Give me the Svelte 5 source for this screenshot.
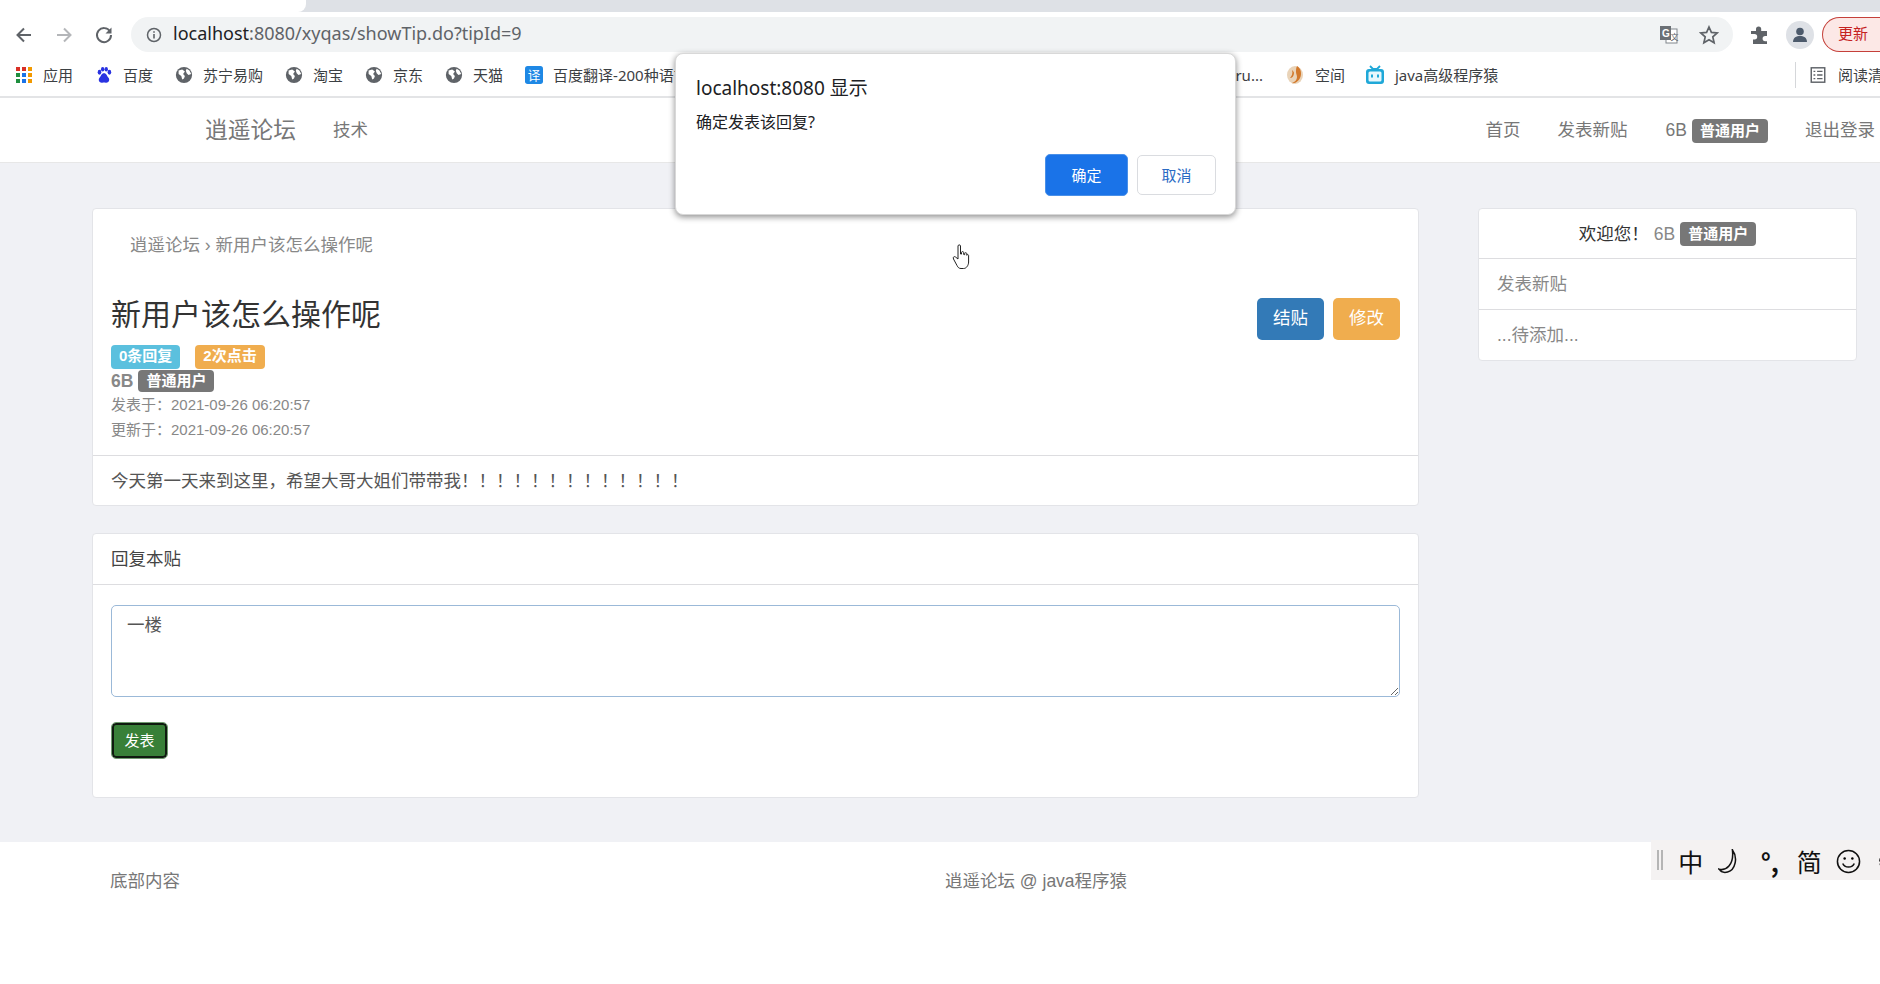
<script>
  const bookmarksLeft = [
    { name: "苏宁易购" },
    { name: "淘宝" },
    { name: "京东" },
    { name: "天猫" }
  ];
  const title = "新用户该怎么操作呢";
</script>

{#snippet globe()}
  <svg class="bm-icon" viewBox="0 0 20 20">
    <circle cx="10" cy="10" r="9" fill="#5f6368" />
    <path d="M4 5l4-1 3 2-2 3 2 2-1 3-2 1-1-4-3-2zM13 3l3 2 2 4-3 1-2-2-1-3z" fill="#fff" />
  </svg>
{/snippet}

<div class="chrome">
  <div class="tabstrip"><div class="activetab"></div></div>
  <div class="toolbar">
    <svg class="nav-icon" viewBox="0 0 20 20"><path d="M17 10H4M10 3.5 3.5 10l6.500 6.500" fill="none" stroke="#5f6368" stroke-width="2" /></svg>
    <svg class="nav-icon" viewBox="0 0 20 20"><path d="M3 10h13M10 3.500 16.500 10 10 16.500" fill="none" stroke="#b4b6b9" stroke-width="2" /></svg>
    <svg class="nav-icon" viewBox="0 0 20 20"><path d="M16 6.500A7 7 0 1 0 17 10" fill="none" stroke="#5f6368" stroke-width="2" /><path d="M17.500 2.500v6h-6z" fill="#5f6368" /></svg>
    <div class="omnibox">
      <svg class="info" viewBox="0 0 16 16"><circle cx="8" cy="8" r="6.500" fill="none" stroke="#5f6368" stroke-width="1.500" /><path d="M7.200 7h1.600v4.500H7.200zM7.200 4.200h1.600v1.600H7.200z" fill="#5f6368" /></svg>
      <span class="url"><span class="host">localhost</span>:8080/xyqas/showTip.do?tipId=9</span>
      <svg class="translate" viewBox="0 0 20 20"><rect x="7" y="4" width="11" height="14" fill="#fff" stroke="#80868b" /><rect x="1" y="1" width="11" height="14" fill="#6b7075" /><text x="3" y="12" font-size="10" font-weight="700" fill="#fff" font-family="Liberation Sans">G</text><text x="11.500" y="15" font-size="8" fill="#5f6368" font-family="Noto Sans CJK SC">文</text></svg>
      <svg class="star" viewBox="0 0 20 20"><path d="m10 2 2.400 5.400 5.800.6-4.400 3.900 1.300 5.800L10 14.700 4.900 17.700l1.300-5.800L1.800 8l5.800-.6z" fill="none" stroke="#5f6368" stroke-width="1.700" /></svg>
    </div>
    <svg class="puzzle" viewBox="0 0 20 20"><path d="M1 6h5V4a2.600 2.600 0 0 1 5.200 0v2H17v5h-1.800a2.600 2.600 0 0 0 0 5.200H17V19H3v-4.500h1.500a2.700 2.700 0 0 0 0-5.400H1z" fill="#5f6368" /></svg>
    <div class="avatar">
      <svg viewBox="0 0 20 20"><circle cx="10" cy="6.500" r="3.800" fill="#4c5a6b" /><path d="M3 17c0-4.500 3.500-6 7-6s7 1.500 7 6z" fill="#4c5a6b" /></svg>
    </div>
    <div class="update">更新</div>
  </div>
  <div class="bookmarks">
    <div class="bm-left">
      <div class="bm">
        <svg class="bm-icon" viewBox="0 0 18 18">
          <rect x="1" y="1" width="4" height="4" fill="#d93025" /><rect x="7" y="1" width="4" height="4" fill="#d93025" /><rect x="13" y="1" width="4" height="4" fill="#f29900" />
          <rect x="1" y="7" width="4" height="4" fill="#1e8e3e" /><rect x="7" y="7" width="4" height="4" fill="#1a73e8" /><rect x="13" y="7" width="4" height="4" fill="#f29900" />
          <rect x="1" y="13" width="4" height="4" fill="#1e8e3e" /><rect x="7" y="13" width="4" height="4" fill="#1a73e8" /><rect x="13" y="13" width="4" height="4" fill="#f29900" />
        </svg>
        应用
      </div>
      <div class="bm">
        <svg class="bm-icon" viewBox="0 0 20 20" fill="#2932e1">
          <ellipse cx="5" cy="7" rx="2" ry="2.700" /><ellipse cx="8.500" cy="3.500" rx="1.900" ry="2.500" /><ellipse cx="12.500" cy="3.500" rx="1.900" ry="2.500" /><ellipse cx="16" cy="7" rx="2" ry="2.700" />
          <path d="M10 8c-3 0-3 3-5 5-2 2.500 0 6 3 5.500 1.500-.3 2.500-.3 4 0 3 .5 5-3 3-5.500-2-2-2-5-5-5z" />
        </svg>
        百度
      </div>
      {#each bookmarksLeft as b}
        <div class="bm">{@render globe()}{b.name}</div>
      {/each}
      <div class="bm">
        <svg class="bm-icon" viewBox="0 0 20 20"><rect width="20" height="20" rx="3" fill="#1e88e5" /><text x="10" y="15.500" font-size="14" text-anchor="middle" fill="#fff" font-family="Noto Sans CJK SC">译</text></svg>
        百度翻译-200种语言
      </div>
    </div>
    <div class="bm">tru...</div>
    <div class="bm space">
      <svg class="bm-icon wide" viewBox="0 0 20 20"><ellipse cx="10" cy="10" rx="8" ry="9" fill="#e9d3b8" /><path d="M12 1c4 2 5 8 3 12-1.500 3-5 6-8 5 3-1 5-3 5-6 0-2-1-3-1-5s0-4 1-6z" fill="#d2782a" /><path d="M7 5c1 3 0 6-2 8 2 0 4-2 4-5 0-1-1-2-2-3z" fill="#d2782a" /></svg>
      空间
    </div>
    <div class="bm">
      <svg class="bm-icon wide" viewBox="0 0 20 20"><path d="M5 1l3 3h4l3-3" fill="none" stroke="#1fa8d8" stroke-width="1.800" /><rect x="1" y="4" width="18" height="15" rx="3" fill="#1fa8d8" /><rect x="3.500" y="6.500" width="13" height="10" rx="1.500" fill="#e8f7fc" /><rect x="6" y="9.500" width="2" height="3" fill="#1fa8d8" /><rect x="12" y="9.500" width="2" height="3" fill="#1fa8d8" /></svg>
      java高级程序猿
    </div>
    <div class="bm-sep"></div>
    <div class="bm reader">
      <svg class="bm-icon" viewBox="0 0 20 20"><rect x="2.500" y="2" width="15" height="16" fill="none" stroke="#5f6368" stroke-width="1.600" /><path d="M5 6h2M9 6h6M5 10h2M9 10h6M5 14h2M9 14h6" stroke="#5f6368" stroke-width="1.600" /></svg>
      <span>阅读清单</span>
    </div>
  </div>
</div>

<nav class="navbar">
  <a class="brand">逍遥论坛</a>
  <a class="link tech">技术</a>
  <div class="nav-right">
    <a class="link">首页</a>
    <a class="link">发表新贴</a>
    <span class="link user">6B <span class="label">普通用户</span></span>
    <a class="link">退出登录</a>
  </div>
</nav>

<main class="page">
  <div class="col-main">
    <section class="card">
      <div class="post-head">
        <div class="crumb">逍遥论坛 › {title}</div>
        <div class="title-row">
          <div class="title-info">
            <h1>{title}</h1>
            <div class="badges">
              <span class="label info-l">0条回复</span>
              <span class="label warn-l">2次点击</span>
            </div>
            <div class="author"><b>6B</b> <span class="label">普通用户</span></div>
            <div class="meta">发表于：2021-09-26 06:20:57</div>
            <div class="meta">更新于：2021-09-26 06:20:57</div>
          </div>
          <div class="actions">
            <button class="btn blue">结贴</button>
            <button class="btn orange">修改</button>
          </div>
        </div>
      </div>
      <div class="post-body">今天第一天来到这里，希望大哥大姐们带带我！！！！！！！！！！！！！</div>
    </section>

    <section class="card reply">
      <div class="reply-head">回复本贴</div>
      <div class="reply-body">
        <textarea class="box">一楼</textarea>
        <button class="submit">发表</button>
      </div>
    </section>
  </div>

  <aside class="card side">
    <div class="side-row welcome">欢迎您！ <span class="gray">6B</span> <span class="label">普通用户</span></div>
    <div class="side-row">发表新贴</div>
    <div class="side-row">...待添加...</div>
  </aside>
</main>

<footer class="footer">
  <span class="foot-left">底部内容</span>
  <span class="foot-mid">逍遥论坛 @ java程序猿</span>
</footer>

<div class="dialog">
  <div class="d-title">localhost:8080 显示</div>
  <div class="d-msg">确定发表该回复?</div>
  <div class="d-btns">
    <button class="ok">确定</button>
    <button class="cancel">取消</button>
  </div>
</div>

<svg class="cursor" viewBox="0 0 18 26">
  <path d="M6 2c0-1.500 2.500-1.500 2.500 0v8l1 .1V8.500c0-1.200 2.200-1.200 2.200 0v2l1 .2V9.500c0-1.200 2.100-1 2.100.2v1.600c.1-1 1.800-1 1.800.2V18c0 3-2 6.500-5 6.500H9c-2 0-3-1-4-3L1.500 15c-1-2 1-3 2-2L6 15z" fill="#fff" stroke="#222" stroke-width="1" />
</svg>

<div class="ime">
  <span class="ime-grip"></span>
  <span class="ime-cell">中</span>
  <span class="ime-cell"><svg class="ime-svg" viewBox="0 0 26 26"><path d="M15 1c6 8 3 21-5 23-4 1-7 0-9-3 7 2 16-4 14-20z" fill="none" stroke="#111" stroke-width="1.600" /></svg></span>
  <span class="ime-cell punct">°,</span>
  <span class="ime-cell">简</span>
  <span class="ime-cell"><svg class="ime-svg" viewBox="0 0 26 26"><circle cx="13" cy="13" r="11.500" fill="none" stroke="#111" stroke-width="1.600" /><circle cx="9" cy="10" r="1.300" /><circle cx="17" cy="10" r="1.300" /><path d="M7 15c2 5 10 5 12 0" fill="none" stroke="#111" stroke-width="1.600" /></svg></span>
  <span class="ime-cell"><svg class="ime-svg" viewBox="0 0 26 26"><circle cx="13" cy="13" r="8" fill="none" stroke="#111" stroke-width="3.500" stroke-dasharray="3 2" /></svg></span>
</div>

<style>
  :global(body) {
    margin: 0;
    background: #fff;
    font-family: "Liberation Sans", "Noto Sans CJK SC", sans-serif;
    font-size: 17.5px;
    color: #333;
    height: 984px;
    overflow: hidden;
    position: relative;
  }

  /* browser chrome */
  .chrome {
    font-family: "Noto Sans", "Noto Sans CJK SC", sans-serif;
    border-bottom: 2px solid #e3e4e6;
    height: 96px;
    background: #fff;
  }
  .tabstrip {
    height: 12px;
    background: #dee1e6;
  }
  .activetab {
    width: 306px;
    height: 12px;
    background: #fff;
    border-bottom-right-radius: 8px;
  }
  .toolbar {
    height: 45px;
    display: flex;
    align-items: center;
    padding-left: 14px;
  }
  .nav-icon {
    width: 20px;
    height: 20px;
    margin-right: 20px;
    flex: none;
  }
  .omnibox {
    width: 1602px;
    flex: none;
    margin-left: -3px;
    height: 35px;
    background: #f1f3f4;
    border-radius: 18px;
    display: flex;
    align-items: center;
    padding-left: 15px;
    box-sizing: border-box;
  }
  .info {
    width: 16px;
    height: 16px;
    margin-right: 11px;
  }
  .url {
    font-size: 18px;
    line-height: 22px;
    margin-top: -3px;
    color: #5f6368;
    flex: 1;
  }
  .host {
    color: #202124;
  }
  .translate {
    width: 20px;
    height: 20px;
    margin-right: 20px;
  }
  .star {
    width: 20px;
    height: 20px;
    margin-right: 14px;
  }
  .puzzle {
    width: 20px;
    height: 20px;
    margin-left: 17px;
    flex: none;
  }
  .avatar {
    width: 28px;
    height: 28px;
    flex: none;
    border-radius: 50%;
    background: #dee1e6;
    margin-left: 16px;
    display: flex;
    align-items: center;
    justify-content: center;
  }
  .avatar svg {
    width: 20px;
    height: 20px;
  }
  .update {
    margin-left: 8px;
    flex: none;
    width: 58px;
    height: 35px;
    line-height: 31px;
    box-sizing: border-box;
    border: 1px solid #c5403a;
    border-right: 0;
    border-radius: 18px 0 0 18px;
    background: #fce8e6;
    color: #c5221f;
    font-size: 15px;
    padding-left: 15px;
    white-space: nowrap;
  }
  .bookmarks {
    height: 36px;
    display: flex;
    align-items: center;
    padding-left: 15px;
    font-size: 15px;
    line-height: 20px;
    color: #3c4043;
    white-space: nowrap;
  }
  .bm-left {
    display: flex;
    width: 1215px;
    flex: none;
    overflow: hidden;
  }
  .bm {
    display: flex;
    align-items: center;
    gap: 10px;
    margin-right: 22px;
    flex: none;
  }
  .bm.space {
    margin-right: 20px;
  }
  .bm-icon {
    width: 18px;
    height: 18px;
    flex: none;
  }
  .bm-icon.wide {
    width: 20px;
    height: 20px;
  }
  .bm-sep {
    width: 1px;
    height: 26px;
    background: #d5d7da;
    margin: 0 13px 0 auto;
    flex: none;
  }
  .bm.reader {
    width: 71px;
    margin-right: 0;
    overflow: hidden;
    gap: 11px;
  }

  /* site navbar */
  .navbar {
    height: 64px;
    background: #fff;
    border-bottom: 1px solid #e7e7e7;
    display: flex;
    align-items: center;
    padding-left: 205px;
    color: #777;
  }
  .brand {
    font-size: 22.75px;
    margin-right: 37px;
    margin-top: -3px;
  }
  .link {
    font-size: 17.5px;
    margin-top: -3px;
  }
  .nav-right {
    margin-left: auto;
    display: flex;
    align-items: center;
    gap: 37px;
    margin-right: 5px;
  }
  .user {
    display: flex;
    align-items: center;
    gap: 5px;
    margin-top: 0;
    margin-left: 1px;
  }
  .user .label {
    margin-top: 2px;
  }
  .label {
    display: inline-block;
    background: #777;
    color: #fff;
    font-size: 15px;
    font-weight: 700;
    line-height: 16px;
    padding: 4px 8px;
    border-radius: 4px;
  }

  /* main */
  .page {
    background: #f0f1f5;
    display: flex;
    align-items: flex-start;
    gap: 59px;
    padding: 45px 23px 44px 92px;
    height: 590px;
    box-sizing: content-box;
  }
  .col-main {
    width: 1327px;
    flex: none;
    display: flex;
    flex-direction: column;
    gap: 27px;
  }
  .card {
    background: #fff;
    border: 1px solid #e3e4e8;
    border-radius: 4px;
    box-sizing: border-box;
  }
  .post-head {
    padding: 0 18px;
    height: 247px;
    border-bottom: 1px solid #dddde0;
    box-sizing: border-box;
  }
  .crumb {
    padding: 24px 0 0 19px;
    line-height: 24px;
    color: #888;
    font-size: 17.5px;
  }
  .title-row {
    display: flex;
    justify-content: space-between;
    align-items: flex-start;
  }
  h1 {
    margin: 38px 0 0;
    font-size: 30px;
    font-weight: 400;
    line-height: 40px;
    color: #333;
  }
  .badges {
    display: flex;
    gap: 15px;
    margin-top: 10px;
    height: 24px;
  }
  .badges .label {
    font-size: 15px;
    padding: 3px 8px;
  }
  .info-l {
    background: #5bc0de;
  }
  .warn-l {
    background: #f0ad4e;
  }
  .author {
    color: #888;
    font-size: 17.5px;
    height: 24px;
    display: flex;
    gap: 5px;
    align-items: center;
  }
  .author .label {
    padding: 3px 8px;
  }
  .meta {
    color: #888;
    font-size: 15px;
    line-height: 24.500px;
  }
  .actions {
    display: flex;
    gap: 9px;
    margin-top: 41px;
  }
  .btn {
    width: 67px;
    height: 42px;
    border: 1px solid transparent;
    border-radius: 5px;
    color: #fff;
    font: inherit;
    font-size: 17.5px;
    line-height: 20px;
    padding: 0 0 3px;
  }
  .blue {
    background: #337ab7;
  }
  .orange {
    background: #f0ad4e;
  }
  .post-body {
    padding: 13px 18px 0;
    height: 49px;
    line-height: 25px;
    box-sizing: border-box;
    color: #555;
    font-size: 17.5px;
  }
  .reply-head {
    height: 51px;
    line-height: 50px;
    padding-left: 18px;
    border-bottom: 1px solid #dddde0;
    box-sizing: border-box;
    color: #444;
  }
  .reply-body {
    padding: 20px 18px 0;
    height: 212px;
    box-sizing: border-box;
  }
  .box {
    display: block;
    width: 100%;
    height: 92px;
    box-sizing: border-box;
    border: 1px solid #9bb9d8;
    border-radius: 5px;
    padding: 7px 15px;
    font: inherit;
    font-size: 17.5px;
    line-height: 25px;
    color: #555;
    outline: 0;
    background: #fff;
  }
  .submit {
    display: block;
    margin: 26px 0 0 1px;
    width: 55px;
    height: 35px;
    box-sizing: border-box;
    background: #388038;
    border: 2px solid #0f1a0f;
    outline: 1px solid #6f9a6f;
    outline-offset: 0;
    border-radius: 4px;
    color: #fff;
    font: inherit;
    font-size: 15px;
    line-height: 18px;
    padding: 0;
  }

  /* sidebar */
  .side {
    width: 379px;
    flex: none;
  }
  .side-row {
    height: 51px;
    line-height: 50px;
    padding-left: 18px;
    color: #888;
    border-top: 1px solid #dddde0;
    box-sizing: border-box;
  }
  .side-row:first-child {
    border-top: 0;
    height: 49px;
  }
  .welcome {
    color: #333;
    padding-left: 0;
    display: flex;
    justify-content: center;
    align-items: center;
    gap: 5px;
  }
  .gray {
    color: #888;
  }

  .footer {
    display: flex;
    padding: 27px 0 0 110px;
    color: #777;
    font-size: 17.5px;
    line-height: 25px;
  }
  .foot-mid {
    margin-left: 765px;
  }

  /* alert dialog */
  .dialog {
    position: absolute;
    left: 675px;
    top: 53px;
    width: 561px;
    height: 162px;
    box-sizing: border-box;
    background: #fff;
    border: 1px solid #d8d8d8;
    border-radius: 8px;
    box-shadow: 0 2px 6px rgba(0, 0, 0, 0.45);
    padding: 21px 20px;
    font-family: "Noto Sans", "Noto Sans CJK SC", sans-serif;
    color: #202124;
  }
  .d-title {
    font-size: 19px;
    line-height: 26px;
  }
  .d-msg {
    font-size: 16px;
    line-height: 22px;
    margin-top: 10px;
  }
  .d-btns {
    position: absolute;
    right: 19px;
    top: 100px;
    display: flex;
    align-items: center;
    gap: 9px;
  }
  .ok {
    width: 83px;
    height: 42px;
    background: #1a73e8;
    border: 1px solid #4a90e8;
    border-radius: 5px;
    color: #fff;
    font: inherit;
    font-size: 15px;
    line-height: 20px;
    padding: 0 0 1px;
  }
  .cancel {
    width: 79px;
    height: 40px;
    background: #fff;
    border: 1px solid #dadce0;
    border-radius: 5px;
    color: #2a6bc4;
    font: inherit;
    font-size: 15px;
    line-height: 20px;
    padding: 0 0 1px;
  }

  .cursor {
    position: absolute;
    left: 952px;
    top: 244px;
    width: 18px;
    height: 26px;
  }

  /* IME toolbar floating over the page */
  .ime {
    position: absolute;
    left: 1651px;
    top: 840px;
    width: 229px;
    height: 40px;
    background: #f4f2f2;
    display: flex;
    align-items: center;
    gap: 14px;
    padding-left: 6px;
    box-sizing: border-box;
    color: #111;
    font-family: "Noto Sans CJK SC", sans-serif;
    overflow: hidden;
  }
  .ime-grip {
    width: 2px;
    height: 20px;
    flex: none;
    border-left: 2px solid #b5b5b5;
    border-right: 2px solid #b5b5b5;
    margin-right: 1px;
  }
  .ime-cell {
    width: 25.500px;
    flex: none;
    font-size: 25px;
    line-height: 28px;
    margin-top: 2px;
    text-align: center;
    display: flex;
    justify-content: center;
    align-items: center;
  }
  .ime-svg {
    width: 25px;
    height: 25px;
  }
  .punct {
    font-weight: 700;
  }
</style>
